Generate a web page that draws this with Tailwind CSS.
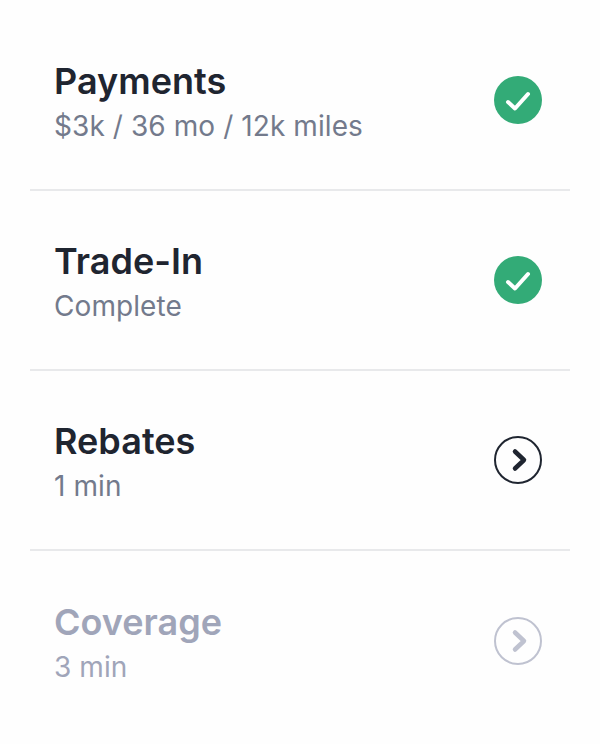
<!doctype html>
<html><head><meta charset="utf-8"><script src="https://cdn.jsdelivr.net/npm/@tailwindcss/browser@4"></script></head>
<body class="bg-white font-['Inter',sans-serif]">
<div class="w-[600px] h-[744px] px-[30px] pt-[11px] bg-[#fefefe]">
<div class="h-[180px] border-b-2 border-[#e8e9eb] flex items-center justify-between pl-[24px] pr-[28px]">
<div class="flex flex-col pt-[2px]"><span class="text-[36px] tracking-[0.02px] leading-[50px] font-semibold text-[#1f2530]">Payments</span><span class="text-[28px] tracking-[0.08px] leading-[40px] text-[#737a8c]">$3k / 36 mo / 12k miles</span></div>
<svg class="w-[48px] h-[48px]" viewBox="0 0 48 48"><circle cx="24" cy="24" r="24" fill="#33ab77"/><path d="M14 26l7 6.500 13-14.500" fill="none" stroke="#fff" stroke-width="4" stroke-linecap="round" stroke-linejoin="round"/></svg>
</div>
<div class="h-[180px] border-b-2 border-[#e8e9eb] flex items-center justify-between pl-[24px] pr-[28px]">
<div class="flex flex-col pt-[2px]"><span class="text-[36px] tracking-[0.02px] leading-[50px] font-semibold text-[#1f2530]">Trade-In</span><span class="text-[28px] tracking-[0.08px] leading-[40px] text-[#737a8c]">Complete</span></div>
<svg class="w-[48px] h-[48px]" viewBox="0 0 48 48"><circle cx="24" cy="24" r="24" fill="#33ab77"/><path d="M14 26l7 6.500 13-14.500" fill="none" stroke="#fff" stroke-width="4" stroke-linecap="round" stroke-linejoin="round"/></svg>
</div>
<div class="h-[180px] border-b-2 border-[#e8e9eb] flex items-center justify-between pl-[24px] pr-[28px]">
<div class="flex flex-col pt-[2px]"><span class="text-[36px] tracking-[0.02px] leading-[50px] font-semibold text-[#1f2530]">Rebates</span><span class="text-[28px] tracking-[0.08px] leading-[40px] text-[#737a8c]">1 min</span></div>
<svg class="w-[48px] h-[48px]" viewBox="0 0 48 48"><circle cx="24" cy="24" r="23" fill="none" stroke="#1f2530" stroke-width="2"/><path d="M21 15.500l9 8.500-9 8.500" fill="none" stroke="#1f2530" stroke-width="4.500" stroke-linecap="round" stroke-linejoin="round"/></svg>
</div>
<div class="h-[180px] flex items-center justify-between pl-[24px] pr-[28px]">
<div class="flex flex-col pt-[2px]"><span class="text-[36px] tracking-[0.02px] leading-[50px] font-semibold text-[#a0a5b9]">Coverage</span><span class="text-[28px] tracking-[0.08px] leading-[40px] text-[#a0a5b9]">3 min</span></div>
<svg class="w-[48px] h-[48px]" viewBox="0 0 48 48"><circle cx="24" cy="24" r="23" fill="none" stroke="#bfc2d0" stroke-width="2"/><path d="M21 15.500l9 8.500-9 8.500" fill="none" stroke="#bfc2d0" stroke-width="4.500" stroke-linecap="round" stroke-linejoin="round"/></svg>
</div>
</div>
</body></html>
